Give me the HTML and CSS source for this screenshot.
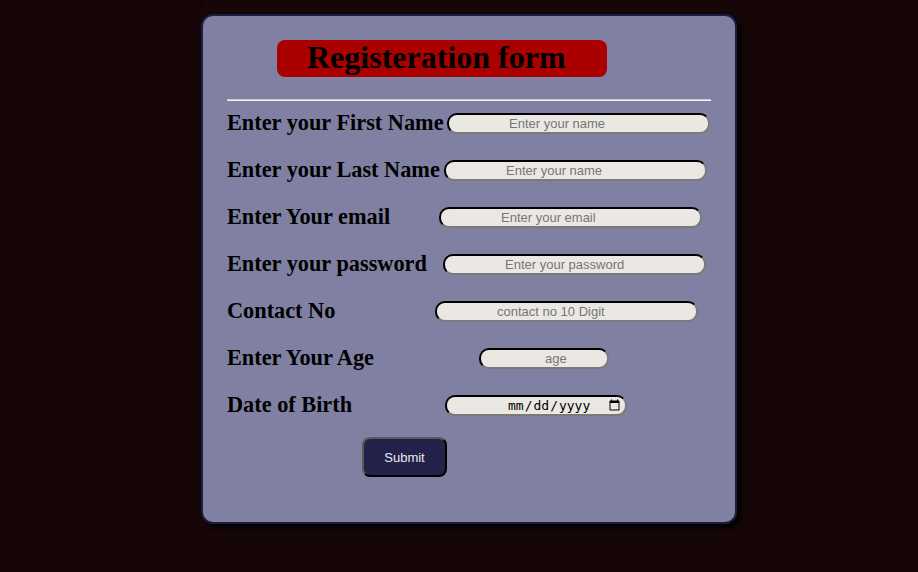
FILE: index.html
```html
<!DOCTYPE html>
<html lang="en">
<head>
<meta charset="utf-8">
<title>Registeration form</title>
<link rel="stylesheet" href="styles.css">
</head>
<body>
<div class="top-mark">a</div>
<form class="card">
  <h1 class="title">Registeration form</h1>
  <hr class="rule">
  <div class="row row--first">
    <label class="label">Enter your First Name</label>
    <input class="field" type="text" placeholder="Enter your name">
  </div>
  <div class="row row--last">
    <label class="label">Enter your Last Name</label>
    <input class="field" type="text" placeholder="Enter your name">
  </div>
  <div class="row row--email">
    <label class="label">Enter Your email</label>
    <input class="field" type="email" placeholder="Enter your email">
  </div>
  <div class="row row--pass">
    <label class="label">Enter your password</label>
    <input class="field" type="password" placeholder="Enter your password">
  </div>
  <div class="row row--contact">
    <label class="label">Contact No</label>
    <input class="field" type="tel" placeholder="contact no 10 Digit">
  </div>
  <div class="row row--age">
    <label class="label">Enter Your Age</label>
    <input class="field field--age" type="number" placeholder="age">
  </div>
  <div class="row row--dob">
    <label class="label">Date of Birth</label>
    <input class="field field--date" type="date">
  </div>
  <button class="submit" type="submit">Submit</button>
</form>
</body>
</html>
```

FILE: styles.css
```css
html, body {
  margin: 0;
  padding: 0;
  background: #160607;
}

body {
  font-family: "Liberation Serif", "Times New Roman", serif;
  min-height: 572px;
}

.top-mark {
  height: 14px;
  padding-left: 200px;
  font-size: 8px;
  line-height: 9px;
  color: #000000;
  font-family: "Liberation Serif", serif;
}

.card {
  box-sizing: border-box;
  width: 536px;
  height: 510px;
  margin-left: 201px;
  padding: 24px 24px 0 24px;
  background: #8080a2;
  border: 2px solid #1c1c40;
  border-radius: 12px;
  box-shadow: 4px 4px 5px #000000;
}

.title {
  box-sizing: border-box;
  width: 330px;
  height: 37px;
  margin: 0 0 0 50px;
  padding-left: 30px;
  background: #aa0000;
  border-radius: 8px;
  font-size: 32px;
  line-height: 35px;
  font-weight: bold;
  color: #000000;
  white-space: nowrap;
}

.rule {
  margin: 22px 0 12px 0;
  border: none;
  border-top: 1px solid #c8c8d4;
  border-bottom: 1px solid #f2f2f6;
  height: 0;
}

.row {
  display: flex;
  align-items: flex-start;
  margin-bottom: 25px;
}

.label {
  flex: none;
  margin-top: -3px;
  font-size: 22.3px;
  font-weight: bold;
  line-height: 25px;
  color: #000000;
  white-space: nowrap;
}

.row--first .label { width: 220px; }
.row--last .label { width: 217px; }
.row--email .label { width: 212px; }
.row--pass .label { width: 216px; }
.row--contact .label { width: 208px; }
.row--age .label { width: 252px; }
.row--dob .label { width: 218px; }

.field {
  box-sizing: border-box;
  width: 263px;
  height: 21px;
  padding: 1px 2px 1px 60px;
  background: #ebe8e4;
  border: 2px inset #767676;
  border-top-color: #1e1e1e;
  border-left-color: #1e1e1e;
  border-right-color: #7a7a7a;
  border-bottom-color: #7a7a7a;
  border-radius: 10px;
  font-family: "Liberation Sans", Arial, sans-serif;
  font-size: 13px;
  color: #000000;
  text-align: left;
  outline: none;
}

.field::placeholder {
  color: #757575;
}

.field--age {
  width: 130px;
  padding-left: 64px;
}

.field--date {
  width: 182px;
  padding-left: 60px;
  font-family: "DejaVu Sans Mono", monospace;
  font-size: 13px;
}

.submit {
  display: block;
  box-sizing: border-box;
  width: 85px;
  height: 40px;
  margin: -5px 0 0 135px;
  background: #22224a;
  border: 2px outset #000000;
  border-top-color: #5a5a5a;
  border-left-color: #5a5a5a;
  border-right-color: #000000;
  border-bottom-color: #000000;
  border-radius: 8px;
  color: #ececf4;
  font-family: "Liberation Sans", Arial, sans-serif;
  font-size: 13px;
  padding: 0;
}
```
